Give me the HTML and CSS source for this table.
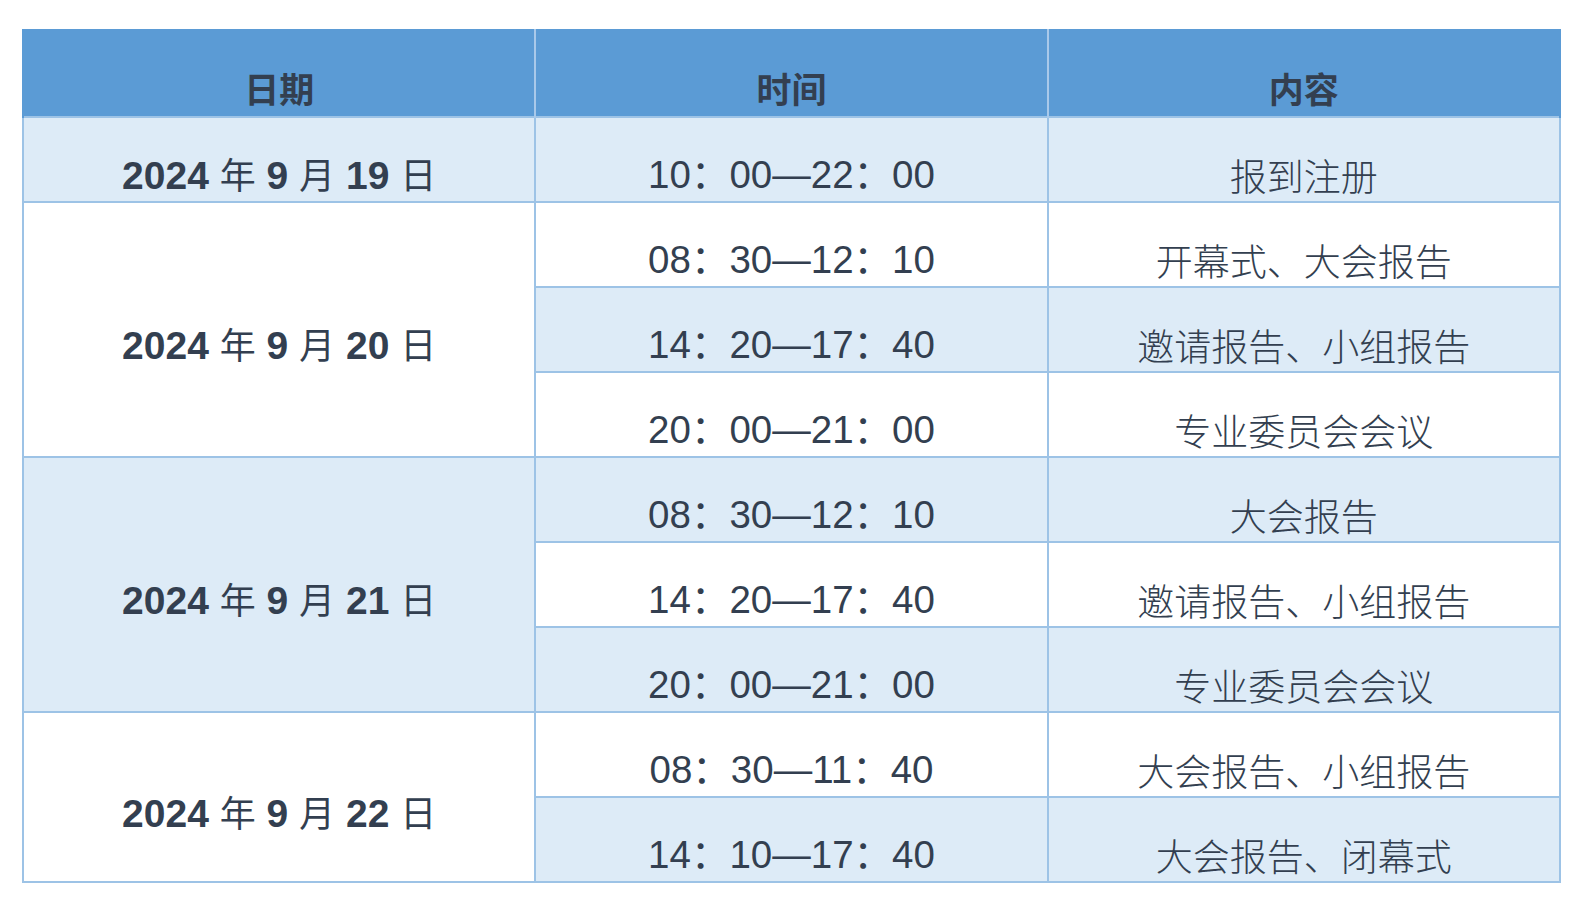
FILE: index.html
```html
<!DOCTYPE html>
<html lang="zh-CN">
<head>
<meta charset="utf-8">
<title>日程安排</title>
<link rel="stylesheet" href="styles.css">
</head>
<body>
<table class="schedule">
  <colgroup><col class="c1"><col class="c2"><col class="c3"></colgroup>
  <thead>
    <tr class="head"><th>日期</th><th>时间</th><th>内容</th></tr>
  </thead>
  <tbody>
    <tr class="shade">
      <td class="date">2024 <span class="cj">年</span> 9 <span class="cj">月</span> 19 <span class="cj">日</span></td>
      <td class="time">10：00—22：00</td>
      <td class="what">报到注册</td>
    </tr>
    <tr>
      <td class="date" rowspan="3">2024 <span class="cj">年</span> 9 <span class="cj">月</span> 20 <span class="cj">日</span></td>
      <td class="time">08：30—12：10</td>
      <td class="what">开幕式、大会报告</td>
    </tr>
    <tr class="shade">
      <td class="time">14：20—17：40</td>
      <td class="what">邀请报告、小组报告</td>
    </tr>
    <tr>
      <td class="time">20：00—21：00</td>
      <td class="what">专业委员会会议</td>
    </tr>
    <tr class="shade">
      <td class="date" rowspan="3">2024 <span class="cj">年</span> 9 <span class="cj">月</span> 21 <span class="cj">日</span></td>
      <td class="time">08：30—12：10</td>
      <td class="what">大会报告</td>
    </tr>
    <tr>
      <td class="time">14：20—17：40</td>
      <td class="what">邀请报告、小组报告</td>
    </tr>
    <tr class="shade">
      <td class="time">20：00—21：00</td>
      <td class="what">专业委员会会议</td>
    </tr>
    <tr>
      <td class="date" rowspan="2">2024 <span class="cj">年</span> 9 <span class="cj">月</span> 22 <span class="cj">日</span></td>
      <td class="time">08：30—11：40</td>
      <td class="what">大会报告、小组报告</td>
    </tr>
    <tr class="shade">
      <td class="time">14：10—17：40</td>
      <td class="what">大会报告、闭幕式</td>
    </tr>
  </tbody>
</table>
</body>
</html>
```
FILE: styles.css
```css
html, body {
  margin: 0;
  padding: 0;
  background: #ffffff;
}

body {
  padding: 29px 0 0 22px;
  font-family: "Liberation Sans", Arial, "Noto Sans CJK SC", sans-serif;
  color: #333f50;
}

.schedule {
  border-collapse: collapse;
  width: 1539px;
  table-layout: fixed;
}

.schedule col {
  width: 33.333%;
}

.schedule th,
.schedule td {
  text-align: center;
  vertical-align: middle;
  padding: 30px 0 0 0;
  line-height: 40px;
  font-size: 38.5px;
  white-space: nowrap;
}

.head th {
  height: 51px;
  padding-top: 36px;
  background: #5b9bd5;
  font-weight: bold;
  font-size: 35px;
  line-height: 36px;
  border-left: 2px solid #a9c9ea;
  border-right: 2px solid #a9c9ea;
  border-top: none;
  border-bottom: none;
}

.head th:first-child {
  border-left: 2px solid #5b9bd5;
}

.head th:last-child {
  border-right: 2px solid #5b9bd5;
}

.schedule td {
  height: 53px;
  border: 2px solid #9dc3e6;
  background: #ffffff;
}

.schedule tr.shade td {
  background: #ddebf7;
}

.schedule td.date {
  font-weight: bold;
  font-size: 39px;
}

.schedule td.date .cj {
  font-family: "Noto Sans CJK SC", sans-serif;
  font-weight: 400;
  font-size: 36px;
}

.schedule td.what {
  font-family: "Noto Sans CJK SC", sans-serif;
  font-size: 37px;
  font-weight: 300;
}
```
